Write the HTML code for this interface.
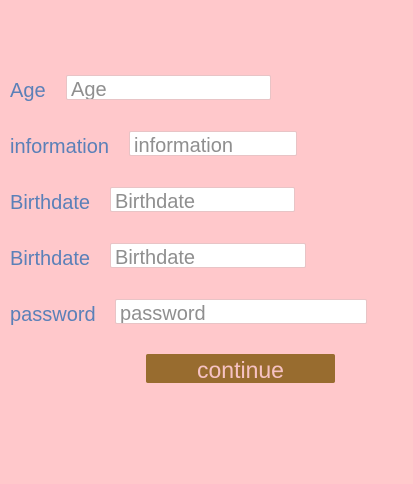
<!DOCTYPE html>
<html><head><style>
body{margin:0;width:413px;height:484px;background:#ffc8cb;font-family:"Liberation Sans",sans-serif;position:relative;overflow:hidden}
.l{position:absolute;left:10px;font-size:20px;color:#5b80b8;line-height:22px}
.i{position:absolute;height:25px;box-sizing:border-box;background:#fff;border:1px solid #e8c4c6;border-radius:2px;font-size:20px;color:#8f8f8f;padding-left:4px;line-height:28px;overflow:hidden}
.b{position:absolute;left:146px;top:354px;width:189px;height:29px;background:#986c2f;border-radius:2px;color:#f6c2c3;font-size:23px;text-align:center;line-height:33px}
</style></head><body>
<div class="l" style="top:80px">Age</div><div class="i" style="left:66px;top:75px;width:205px">Age</div>
<div class="l" style="top:136px">information</div><div class="i" style="left:129px;top:131px;width:168px">information</div>
<div class="l" style="top:192px">Birthdate</div><div class="i" style="left:110px;top:187px;width:185px">Birthdate</div>
<div class="l" style="top:248px">Birthdate</div><div class="i" style="left:110px;top:243px;width:196px">Birthdate</div>
<div class="l" style="top:304px">password</div><div class="i" style="left:115px;top:299px;width:252px">password</div>
<div class="b">continue</div>
</body></html>
